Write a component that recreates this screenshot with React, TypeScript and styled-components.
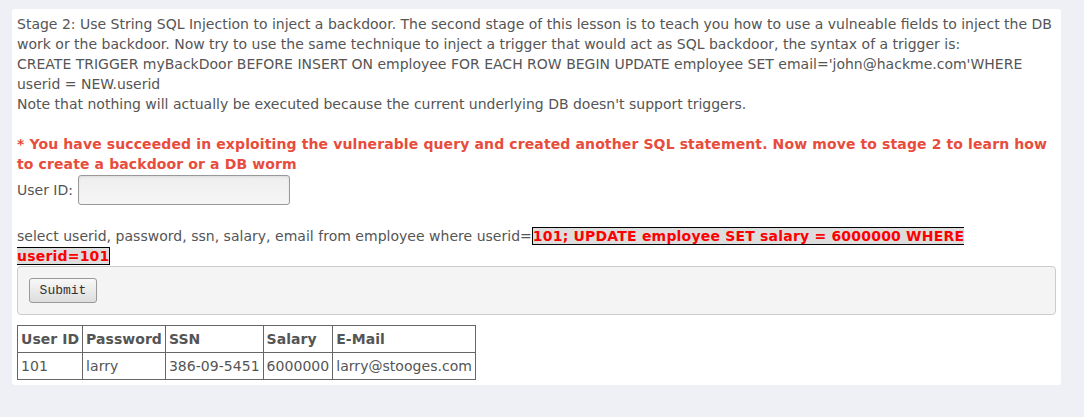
import styled, { createGlobalStyle } from "styled-components";

const GlobalStyle = createGlobalStyle`
  html, body {
    margin: 0;
    padding: 0;
    background: #eff0f5;
  }
  body {
    padding: 9px 23px 0 12px;
    font-family: "DejaVu Sans", Verdana, sans-serif;
  }
`;

const Panel = styled.div`
  background: #ffffff;
  border-radius: 3px;
  padding: 5px;
  font-size: 14px;
  line-height: 20px;
  color: #555555;
`;

const Intro = styled.div`
  margin-bottom: 20px;
`;

const Success = styled.div`
  color: #e74c3c;
  font-weight: 700;
  letter-spacing: 0.12px;
`;

const FieldRow = styled.div`
  display: flex;
  align-items: center;
  gap: 5px;
  height: 31px;
  margin-bottom: 21px;
`;

const TextInput = styled.input`
  width: 212px;
  height: 30px;
  box-sizing: border-box;
  border: 1px solid #999999;
  border-radius: 3px;
  background: linear-gradient(#eeeeee, #f6f6f6);
  box-shadow: inset 0 1px 2px rgba(0, 0, 0, 0.08);
`;

const Query = styled.div`
  letter-spacing: 0.02px;
`;

const Injected = styled.span`
  background: #dddddd;
  border: 1px solid #000000;
  color: #ff0000;
  font-weight: 700;
  letter-spacing: 0.2px;
`;

const ButtonBar = styled.div`
  background: #f4f4f4;
  border: 1px solid #cccccc;
  border-radius: 4px;
  padding: 11px 11px;
  margin-bottom: 10px;
`;

const Button = styled.button`
  display: block;
  width: 68px;
  height: 25px;
  font-family: "Liberation Mono", "Courier New", monospace;
  font-size: 13px;
  color: #333333;
  border: 1px solid #999999;
  border-radius: 3px;
  background: linear-gradient(#f8f8f8, #dddddd);
  padding: 0;
`;

const Table = styled.table`
  border-collapse: collapse;
  border: 1px solid #666666;
`;

const Cell = styled.td<{ $head?: boolean }>`
  border: 1px solid #666666;
  padding: 3px;
  font-weight: ${(p) => (p.$head ? 700 : 400)};
  letter-spacing: ${(p) => (p.$head ? "0.04px" : "0.04px")};
  text-align: left;
  white-space: nowrap;
`;

const headers = ["User ID", "Password", "SSN", "Salary", "E-Mail"];
const rows = [["101", "larry", "386-09-5451", "6000000", "larry@stooges.com"]];

const App = () => {
  return (
    <>
      <GlobalStyle />
      <Panel>
        <Intro>
          Stage 2: Use String SQL Injection to inject a backdoor. The second stage of this lesson is to
          teach you how to use a vulneable fields to inject the DB work or the backdoor. Now try to use
          the same technique to inject a trigger that would act as SQL backdoor, the syntax of a trigger
          is:
          <br />
          CREATE TRIGGER myBackDoor BEFORE INSERT ON employee FOR EACH ROW BEGIN UPDATE employee SET
          email='john@hackme.com'WHERE userid = NEW.userid
          <br />
          Note that nothing will actually be executed because the current underlying DB doesn't support
          triggers.
        </Intro>
        <Success>
          * You have succeeded in exploiting the vulnerable query and created another SQL statement. Now
          move to stage 2 to learn how to create a backdoor or a DB worm
        </Success>
        <FieldRow>
          <span>User ID:</span>
          <TextInput type="text" />
        </FieldRow>
        <Query>
          select userid, password, ssn, salary, email from employee where userid=
          <Injected>101; UPDATE employee SET salary = 6000000 WHERE userid=101</Injected>
        </Query>
        <ButtonBar>
          <Button>Submit</Button>
        </ButtonBar>
        <Table>
          <tbody>
            <tr>
              {headers.map((h) => (
                <Cell as="th" $head key={h}>
                  {h}
                </Cell>
              ))}
            </tr>
            {rows.map((r) => (
              <tr key={r[0]}>
                {r.map((c) => (
                  <Cell key={c}>{c}</Cell>
                ))}
              </tr>
            ))}
          </tbody>
        </Table>
      </Panel>
    </>
  );
};

export default App;
